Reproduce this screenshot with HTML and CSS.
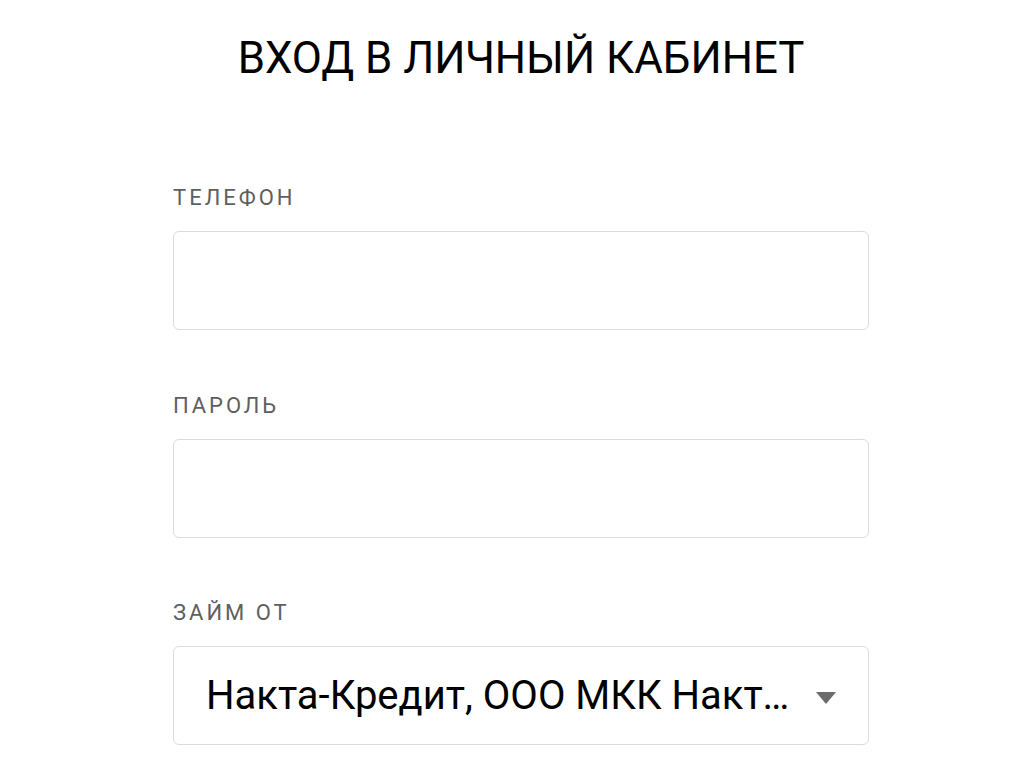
FILE: index.html
```html
<!DOCTYPE html>
<html lang="ru">

<head>
    <meta charset="UTF-8">
    <meta name="viewport" content="width=device-width, initial-scale=1.0">
    <link rel="stylesheet" href="styles.css">
</head>

<body>
    <div class="page">
        <h1 class="title">ВХОД В ЛИЧНЫЙ КАБИНЕТ</h1>
        <form class="login" action="" method="post">
            <div class="field">
                <label for="phone">Телефон</label>
                <input type="text" id="phone" name="phone">
            </div>
            <div class="field">
                <label for="password">Пароль</label>
                <input type="password" id="password" name="password">
            </div>
            <div class="field">
                <label for="lender">Займ от</label>
                <div class="select" id="lender">
                    <span class="select-value">Накта-Кредит, ООО МКК Накта-Кредит</span>
                    <svg class="select-arrow" width="20" height="12" viewBox="0 0 20 12">
                        <path d="M0 0 L20 0 L10 12 Z" fill="#6b6b6b"/>
                    </svg>
                </div>
            </div>
        </form>
    </div>
</body>

</html>
```

FILE: styles.css
```css
body {
    margin: 0;
    padding-left: 16px;
    background: #fff;
    font-family: Roboto, "Noto Sans", sans-serif;
}

.page {
    width: 696px;
    margin: 0 auto;
}

.title {
    margin: 0;
    padding-top: 30px;
    text-align: center;
    font-size: 43.8px;
    font-weight: 400;
    line-height: 56px;
    color: #000;
}

.login {
    display: flex;
    flex-direction: column;
    gap: 62.5px;
    margin-top: 99px;
}

.field {
    display: flex;
    flex-direction: column;
    gap: 20px;
}

.field label {
    font-size: 22px;
    line-height: 26px;
    letter-spacing: 3px;
    text-transform: uppercase;
    color: #5f5f5f;
}

.field input,
.select {
    box-sizing: border-box;
    width: 100%;
    height: 99px;
    margin: 0;
    border: 1px solid #dcdcdc;
    border-radius: 6px;
    background: #fff;
    font-family: inherit;
}

.select {
    display: flex;
    align-items: center;
    gap: 24px;
    padding: 0 32px;
}

.select-value {
    flex: 1;
    min-width: 0;
    overflow: hidden;
    white-space: nowrap;
    text-overflow: ellipsis;
    font-size: 40px;
    line-height: 48px;
    color: #000;
}

.select-arrow {
    flex: none;
    margin-top: 4px;
}
```
